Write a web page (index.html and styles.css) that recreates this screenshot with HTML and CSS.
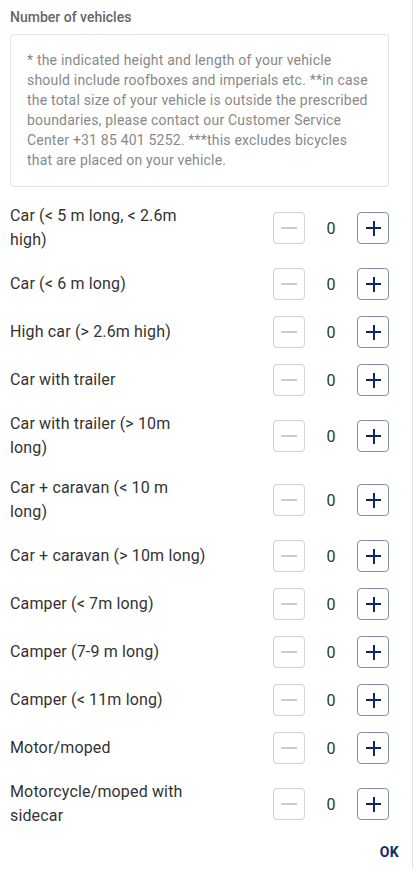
FILE: index.html
```html
<!DOCTYPE html>
<html lang="en">
<head>
<meta charset="utf-8">
<title>Number of vehicles</title>
<link rel="stylesheet" href="styles.css">
</head>
<body>
<div class="panel">
  <div class="content">
    <div class="title">Number of vehicles</div>
    <div class="note">* the indicated height and length of your vehicle should include roofboxes and imperials etc. **in case the total size of your vehicle is outside the prescribed boundaries, please contact our Customer Service Center +31 85 401 5252. ***this excludes bicycles that are placed on your vehicle.</div>
    <div class="rows">
      <div class="row"><div class="label">Car (&lt; 5 m long, &lt; 2.6m high)</div><div class="stepper"><button class="btn minus"><span class="bar"></span></button><span class="count">0</span><button class="btn plus"><span class="bar"></span><span class="bar v"></span></button></div></div>
      <div class="row"><div class="label">Car (&lt; 6 m long)</div><div class="stepper"><button class="btn minus"><span class="bar"></span></button><span class="count">0</span><button class="btn plus"><span class="bar"></span><span class="bar v"></span></button></div></div>
      <div class="row"><div class="label">High car (&gt; 2.6m high)</div><div class="stepper"><button class="btn minus"><span class="bar"></span></button><span class="count">0</span><button class="btn plus"><span class="bar"></span><span class="bar v"></span></button></div></div>
      <div class="row"><div class="label">Car with trailer</div><div class="stepper"><button class="btn minus"><span class="bar"></span></button><span class="count">0</span><button class="btn plus"><span class="bar"></span><span class="bar v"></span></button></div></div>
      <div class="row"><div class="label">Car with trailer (&gt; 10m long)</div><div class="stepper"><button class="btn minus"><span class="bar"></span></button><span class="count">0</span><button class="btn plus"><span class="bar"></span><span class="bar v"></span></button></div></div>
      <div class="row"><div class="label">Car + caravan (&lt; 10 m long)</div><div class="stepper"><button class="btn minus"><span class="bar"></span></button><span class="count">0</span><button class="btn plus"><span class="bar"></span><span class="bar v"></span></button></div></div>
      <div class="row"><div class="label">Car + caravan (&gt; 10m long)</div><div class="stepper"><button class="btn minus"><span class="bar"></span></button><span class="count">0</span><button class="btn plus"><span class="bar"></span><span class="bar v"></span></button></div></div>
      <div class="row"><div class="label">Camper (&lt; 7m long)</div><div class="stepper"><button class="btn minus"><span class="bar"></span></button><span class="count">0</span><button class="btn plus"><span class="bar"></span><span class="bar v"></span></button></div></div>
      <div class="row"><div class="label">Camper (7-9 m long)</div><div class="stepper"><button class="btn minus"><span class="bar"></span></button><span class="count">0</span><button class="btn plus"><span class="bar"></span><span class="bar v"></span></button></div></div>
      <div class="row"><div class="label">Camper (&lt; 11m long)</div><div class="stepper"><button class="btn minus"><span class="bar"></span></button><span class="count">0</span><button class="btn plus"><span class="bar"></span><span class="bar v"></span></button></div></div>
      <div class="row"><div class="label">Motor/moped</div><div class="stepper"><button class="btn minus"><span class="bar"></span></button><span class="count">0</span><button class="btn plus"><span class="bar"></span><span class="bar v"></span></button></div></div>
      <div class="row"><div class="label">Motorcycle/moped with sidecar</div><div class="stepper"><button class="btn minus"><span class="bar"></span></button><span class="count">0</span><button class="btn plus"><span class="bar"></span><span class="bar v"></span></button></div></div>
    </div>
    <div class="actions"><button class="ok">OK</button></div>
  </div>
</div>
</body>
</html>
```
FILE: styles.css
```css
* { box-sizing: border-box; }
html, body { margin: 0; padding: 0; background: #fff; }
body { font-family: Roboto, "Liberation Sans", Arial, sans-serif; color: #333; }
.panel {
  width: 413px;
  min-height: 869px;
  border-right: 1px solid #e2e2e2;
}
.content { padding: 8px 23px 0 10px; }
.title {
  font-size: 14px;
  font-weight: 500;
  color: #666;
  line-height: 18px;
  height: 26px;
}
.note {
  border: 1px solid #e3e3e3;
  border-radius: 4px;
  padding: 15px 16px 16px 16px;
  font-size: 14px;
  line-height: 20px;
  color: #888;
  letter-spacing: 0.2px;
}
.rows { margin-top: 9px; }
.row {
  display: flex;
  align-items: center;
  justify-content: space-between;
  padding: 8px 0;
  min-height: 48px;
}
.label {
  flex: 0 0 197px;
  font-size: 16px;
  line-height: 24px;
  color: #333;
  letter-spacing: 0.15px;
}
.stepper { display: flex; align-items: center; }
.btn {
  width: 32px;
  height: 32px;
  border-radius: 4px;
  background: #fff;
  padding: 0;
  position: relative;
  cursor: pointer;
}
.btn.minus { border: 1px solid #d3d3d3; }
.btn.plus { border: 1px solid #7d8fae; }
.bar {
  position: absolute;
  left: 8px;
  top: 14px;
  width: 15px;
  height: 2px;
}
.minus .bar { background: #cccccc; width: 16px; left: 7px; }
.plus .bar { background: #0b2a63; }
.plus .bar.v { left: 14.5px; top: 7.5px; width: 2px; height: 15px; }
.count {
  width: 52px;
  text-align: center;
  font-size: 16px;
  color: #333;
}
.actions {
  display: flex;
  justify-content: flex-end;
  padding-top: 2px;
}
.ok {
  border: 0;
  background: none;
  font-family: inherit;
  font-size: 14px;
  font-weight: 700;
  color: #0b2a63;
  padding: 6px 0;
  margin-right: -10px;
  letter-spacing: 0.3px;
}
```
